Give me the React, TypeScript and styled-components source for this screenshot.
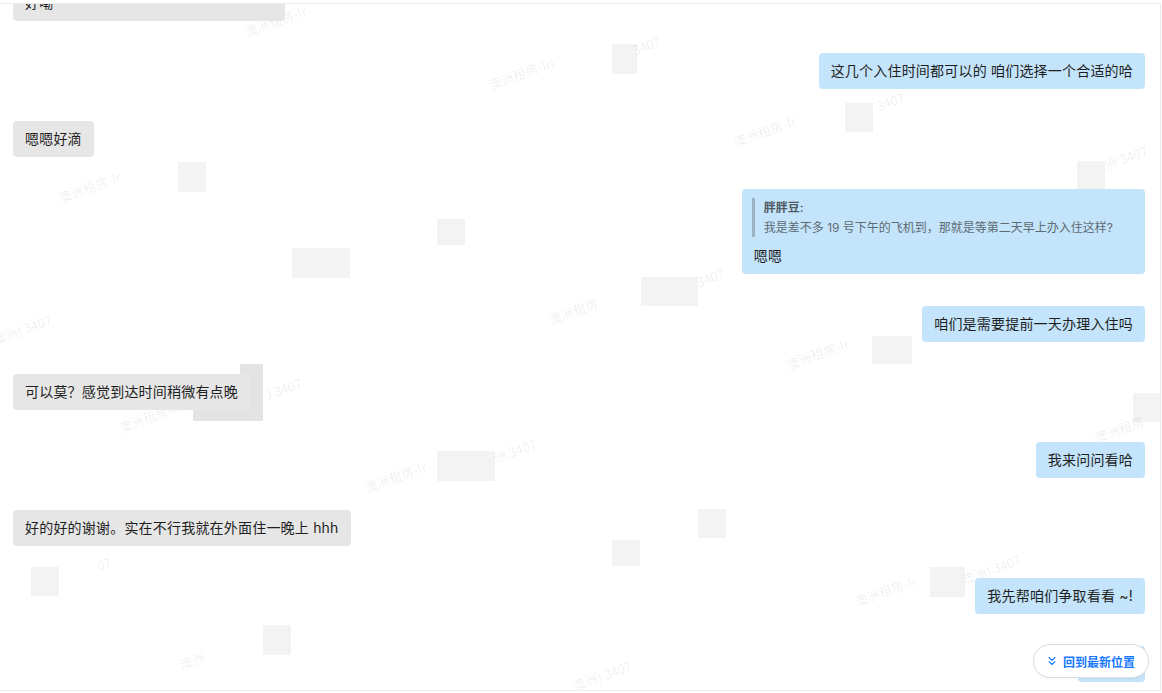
import React from "react";
import styled, { createGlobalStyle } from "styled-components";
import { ChevronsDown } from "lucide-react";

const GlobalStyle = createGlobalStyle`
  html, body { margin: 0; padding: 0; background: #fff; }
  body {
    font-family: "Inter", "Noto Sans CJK SC", sans-serif;
    color: #1f1f1f;
    -webkit-font-smoothing: antialiased;
  }
  * { box-sizing: border-box; }
`;

const Page = styled.div`
  width: 1162px;
  height: 693px;
  padding-top: 3px;
  background: #fff;
  overflow: hidden;
`;

const Frame = styled.div`
  position: relative;
  width: 1161px;
  height: 688px;
  border-top: 1px solid #ededed;
  border-right: 1px solid #ededed;
  border-bottom: 1px solid #ededed;
  overflow: hidden;
`;

const MessageList = styled.div`
  position: relative;
  z-index: 1;
  display: flex;
  flex-direction: column;
  gap: 32px;
  padding: 0 15px 0 13px;
  margin-top: -19px;
`;

const Row = styled.div<{ $mine?: boolean }>`
  display: flex;
  justify-content: ${(p) => (p.$mine ? "flex-end" : "flex-start")};
`;

const Bubble = styled.div<{ $mine?: boolean; $width?: number }>`
  background: ${(p) => (p.$mine ? "#c3e4fa" : "#e6e6e6")};
  border-radius: 4px;
  padding: 8px 12px;
  font-size: 14px;
  line-height: 20px;
  letter-spacing: 0.2px;
  color: #1f1f1f;
  white-space: nowrap;
  ${(p) => (p.$width ? `width: ${p.$width}px;` : "")}
`;

const Quote = styled.div`
  border-left: 3px solid #9db3c4;
  padding-left: 9px;
  margin: 1px 20px 9px -2px;
  font-size: 12px;
  line-height: 19.5px;
  letter-spacing: 0;
  color: #5f6b73;
`;

const QuoteName = styled.div`
  font-weight: 600;
  color: #4f5a62;
`;

const WatermarkLayer = styled.div`
  position: absolute;
  inset: 0;
  pointer-events: none;
  z-index: 0;
`;

const Mark = styled.span`
  position: absolute;
  font-size: 13px;
  color: rgba(0, 0, 0, 0.08);
  transform: rotate(-20deg);
  transform-origin: left bottom;
  white-space: nowrap;
  font-family: "Noto Sans CJK SC", sans-serif;
`;

const Block = styled.div<{ $dark?: boolean }>`
  position: absolute;
  background: ${(p) => (p.$dark ? "#e3e3e3" : "#f3f3f3")};
`;

const JumpButton = styled.button`
  position: absolute;
  z-index: 3;
  right: 11px;
  bottom: 12px;
  height: 34px;
  padding: 0 13px 0 11px;
  display: flex;
  align-items: center;
  gap: 4px;
  border: 1px solid #dcdcdc;
  border-radius: 17px;
  background: #fff;
  color: #1677ff;
  font-family: "Noto Sans CJK SC", sans-serif;
  font-size: 12px;
  font-weight: 700;
  cursor: pointer;
  box-shadow: 0 1px 3px rgba(0, 0, 0, 0.04);
`;

type Msg = { mine?: boolean; text: string; width?: number; quote?: { name: string; text: string } };

const messages: Msg[] = [
  { text: "好嘞", width: 272 },
  { mine: true, text: "这几个入住时间都可以的 咱们选择一个合适的哈" },
  { text: "嗯嗯好滴" },
  {
    mine: true,
    text: "嗯嗯",
    quote: { name: "胖胖豆:", text: "我是差不多 19 号下午的飞机到，那就是等第二天早上办入住这样?" },
  },
  { mine: true, text: "咱们是需要提前一天办理入住吗" },
  { text: "可以莫？感觉到达时间稍微有点晚" },
  { mine: true, text: "我来问问看哈" },
  { text: "好的好的谢谢。实在不行我就在外面住一晚上 hhh" },
  { mine: true, text: "我先帮咱们争取看看 ~!" },
  { mine: true, text: "好的哈" },
];

const marks: [number, number, string][] = [
  [248, 22, "澳洲租房-lr"],
  [636, 40, "3407"],
  [492, 75, "澳洲租房-lri"],
  [880, 96, "3407"],
  [737, 132, "澳洲租房-lr"],
  [1108, 155, "洲 3407"],
  [62, 188, "澳洲租房-lr"],
  [700, 272, "3407"],
  [552, 310, "澳洲租房"],
  [-4, 330, "澳洲) 3407"],
  [790, 355, "澳洲租房-lr"],
  [268, 385, "J 3407"],
  [122, 418, "澳洲租房-lris"],
  [368, 478, "澳洲租房-lr"],
  [497, 448, "洲 3407"],
  [1098, 428, "澳洲租房"],
  [100, 556, "07"],
  [858, 592, "澳洲租房-lr"],
  [965, 570, "澳洲) 3407"],
  [183, 655, "澳洲"],
  [576, 676, "澳洲) 3407"],
  [1140, 650, "房-"],
];

const blocks: [number, number, number, number, boolean?][] = [
  [612, 44, 25, 30],
  [845, 103, 28, 29],
  [1077, 161, 28, 30],
  [437, 219, 28, 26],
  [292, 248, 58, 30],
  [641, 277, 57, 29],
  [872, 336, 40, 28],
  [240, 364, 23, 57, true],
  [193, 390, 70, 31, true],
  [1133, 393, 28, 29],
  [437, 451, 58, 30],
  [698, 509, 28, 29],
  [612, 540, 28, 26],
  [31, 567, 28, 29],
  [930, 567, 35, 30],
  [263, 625, 28, 30],
  [178, 162, 28, 30],
];

export default function App() {
  return (
    <>
      <GlobalStyle />
      <Page>
        <Frame>
          <WatermarkLayer>
            {blocks.map(([x, y, w, h, dark], i) => (
              <Block key={"b" + i} $dark={dark} style={{ left: x, top: y - 4, width: w, height: h }} />
            ))}
            {marks.map(([x, y, t], i) => (
              <Mark key={"m" + i} style={{ left: x, top: y - 4 }}>
                {t}
              </Mark>
            ))}
          </WatermarkLayer>
          <MessageList>
            {messages.map((m, i) => (
              <Row key={i} $mine={m.mine}>
                <Bubble $mine={m.mine} $width={m.width}>
                  {m.quote && (
                    <Quote>
                      <QuoteName>{m.quote.name}</QuoteName>
                      <div>{m.quote.text}</div>
                    </Quote>
                  )}
                  {m.text}
                </Bubble>
              </Row>
            ))}
          </MessageList>
          <JumpButton>
            <ChevronsDown size={14} strokeWidth={2} />
            回到最新位置
          </JumpButton>
        </Frame>
      </Page>
    </>
  );
}
